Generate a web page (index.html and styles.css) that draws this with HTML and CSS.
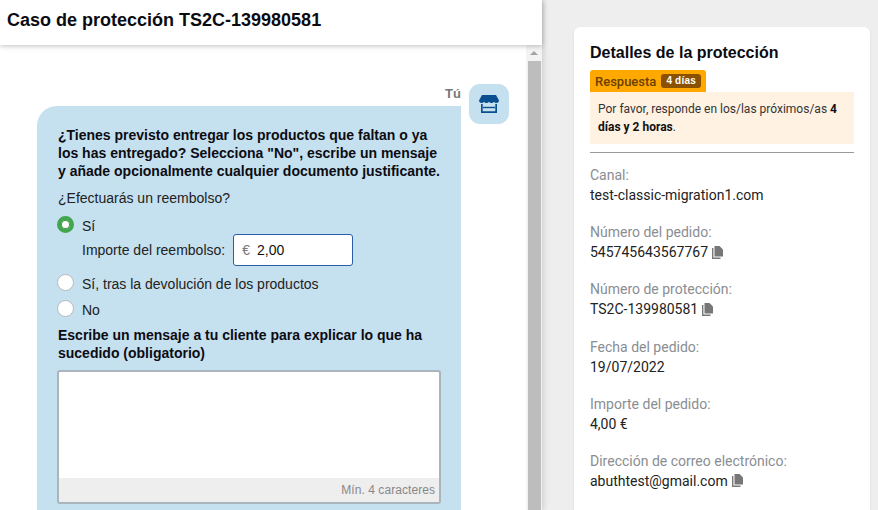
FILE: index.html
```html
<!DOCTYPE html>
<html lang="es">
<head>
<meta charset="utf-8">
<title>Caso de protección</title>
<link rel="stylesheet" href="styles.css">
</head>
<body>
<div class="page">
  <main class="left">
    <header class="head"><h1>Caso de protección TS2C-139980581</h1></header>
    <div class="scrollwrap">
      <div class="chat">
        <div class="msg">
          <div class="bubble-col">
            <div class="who">Tú</div>
            <div class="bubble">
              <p class="q">¿Tienes previsto entregar los productos que faltan o ya los has entregado? Selecciona "No", escribe un mensaje y añade opcionalmente cualquier documento justificante.</p>
              <p class="ask">¿Efectuarás un reembolso?</p>
              <div class="radio-row first"><span class="radio on"></span><span>Sí</span></div>
              <div class="amount-row">
                <span>Importe del reembolso:</span>
                <div class="amount"><span class="cur">€</span><span>2,00</span></div>
              </div>
              <div class="radio-row second"><span class="radio"></span><span>Sí, tras la devolución de los productos</span></div>
              <div class="radio-row third"><span class="radio"></span><span>No</span></div>
              <p class="q write">Escribe un mensaje a tu cliente para explicar lo que ha sucedido (obligatorio)</p>
              <div class="textarea">
                <div class="ta-body"></div>
                <div class="ta-foot">Mín. 4 caracteres</div>
              </div>
            </div>
          </div>
          <div class="avatar">
            <svg width="20" height="18" viewBox="0 0 20 18" aria-hidden="true">
              <path fill="#0a4f8f" d="M3 0h14l3 5.500c0 1.500-1.100 2.500-2.500 2.500-1 0-1.900-.5-2.500-1.300C14.400 7.500 13.500 8 12.500 8S10.600 7.500 10 6.700C9.400 7.500 8.500 8 7.500 8S5.600 7.500 5 6.700C4.400 7.500 3.500 8 2.500 8 1.100 8 0 7 0 5.500z"/>
              <path fill="#0a4f8f" d="M2 9h1.700v7.300h12.600V9H18v9H2z"/>
              <path fill="#0a4f8f" d="M4 11.800h12v1.400H4z"/>
            </svg>
          </div>
        </div>
      </div>
      <div class="scrollbar">
        <span class="arrow"></span>
        <span class="thumb"></span>
      </div>
    </div>
  </main>
  <aside class="right">
    <section class="card">
      <h2>Detalles de la protección</h2>
      <div class="tab"><span>Respuesta</span><span class="pill">4 días</span></div>
      <div class="notice">Por favor, responde en los/las próximos/as <b>4 días y 2 horas</b>.</div>
      <hr class="rule">
      <dl class="facts">
        <div class="fact"><dt>Canal:</dt><dd>test-classic-migration1.com</dd></div>
        <div class="fact"><dt>Número del pedido:</dt><dd>545745643567767<svg class="copy" viewBox="0 0 11 13" aria-hidden="true"><path d="M0 2h1.400v9.600H8.500V13H0z"/><path d="M2.500 0H7.500L11 3.500v7H2.500z"/></svg></dd></div>
        <div class="fact"><dt>Número de protección:</dt><dd>TS2C-139980581<svg class="copy" viewBox="0 0 11 13" aria-hidden="true"><path d="M0 2h1.400v9.600H8.500V13H0z"/><path d="M2.500 0H7.500L11 3.500v7H2.500z"/></svg></dd></div>
        <div class="fact"><dt>Fecha del pedido:</dt><dd>19/07/2022</dd></div>
        <div class="fact"><dt>Importe del pedido:</dt><dd>4,00 €</dd></div>
        <div class="fact"><dt>Dirección de correo electrónico:</dt><dd>abuthtest@gmail.com<svg class="copy" viewBox="0 0 11 13" aria-hidden="true"><path d="M0 2h1.400v9.600H8.500V13H0z"/><path d="M2.500 0H7.500L11 3.500v7H2.500z"/></svg></dd></div>
      </dl>
    </section>
  </aside>
</div>
</body>
</html>
```
FILE: styles.css
```css
* { box-sizing: border-box; }
html, body { margin: 0; height: 100%; overflow: hidden; }
body { font-family: "Liberation Sans", Arial, sans-serif; color: #111; background: #eee; }
.page { display: flex; width: 878px; height: 510px; overflow: hidden; }
.left { width: 542px; flex: none; background: #fff; display: flex; flex-direction: column; box-shadow: 1px 0 6px rgba(0,0,0,.16); position: relative; z-index: 1; }
.head { height: 45px; flex: none; padding: 9px 7px 0; box-shadow: 0 1px 5px rgba(0,0,0,.25); position: relative; z-index: 1; background: #fff; }
.head h1 { margin: 0; font-size: 18px; line-height: 22px; font-weight: 700; color: #0b0b12; white-space: nowrap; }
.scrollwrap { flex: 1; display: flex; min-height: 0; }
.chat { flex: 1; min-width: 0; padding: 39px 0 0 37px; overflow: hidden; }
.msg { display: flex; align-items: flex-start; gap: 8px; }
.bubble-col { width: 424px; flex: none; }
.who { text-align: right; font-size: 13px; line-height: 16px; font-weight: 700; color: #777; height: 22px; padding-top: 2px; }
.bubble { background: #c5e0ef; border-radius: 20px 0 0 0; padding: 20px 20px 20px 21px; height: 470px; font-size: 14px; color: #222; }
.bubble p { margin: 0; }
.q { font-weight: 700; font-size: 14px; line-height: 18px; color: #0c0c12; }
.ask { margin-top: 9px !important; line-height: 18px; }
.radio-row { display: flex; align-items: center; gap: 8px; height: 18px; }
.radio-row.first { margin-top: 10px; }
.radio-row.second { margin-top: 9px; }
.radio-row.third { margin-top: 8px; }
.radio { width: 17px; height: 17px; margin-left: -1px; margin-bottom: 3px; border-radius: 50%; background: #fff; border: 1px solid #b5b9bc; flex: none; }
.radio.on { border: 4px solid #43a64f; box-shadow: 0 0 0 1px #3d9448 inset; }
.amount-row { display: flex; align-items: center; gap: 8px; margin: -1px 0 0 24px; height: 32px; }
.amount { width: 120px; height: 32px; background: #fff; border: 1px solid #2a5ea8; border-radius: 3px; display: flex; align-items: center; padding-left: 8px; gap: 7px; color: #111; }
.cur { color: #777; }
.write { margin-top: 7px !important; }
.textarea { margin: 8px 0 0 -1px; width: 384px; height: 134px; border: 2px solid #aab4bb; border-radius: 3px; background: #fff; display: flex; flex-direction: column; }
.ta-body { flex: 1; }
.ta-foot { height: 24px; background: #eee; text-align: right; font-size: 12px; line-height: 24px; letter-spacing: .06px; color: #888; padding-right: 4px; }
.avatar { width: 40px; height: 40px; border-radius: 11px; background: #c5e0ef; flex: none; display: flex; align-items: center; justify-content: center; }
.scrollbar { width: 16px; flex: none; background: #f3f3f3; display: flex; flex-direction: column; align-items: center; }
.arrow { width: 0; height: 0; margin-top: 6px; border-left: 4px solid transparent; border-right: 4px solid transparent; border-bottom: 4px solid #a3a3a3; }
.thumb { width: 13px; flex: 1; margin-top: 6px; background: #bdbdbd; }
.right { flex: 1; min-width: 0; padding: 27px 8px 0 32px; }
.card { background: #fff; border-radius: 6px; height: 500px; padding: 16px 16px 0; box-shadow: 0 1px 3px rgba(0,0,0,.08); font-family: Roboto, sans-serif; }
.card h2 { margin: 0; font-family: "Liberation Sans", Arial, sans-serif; font-size: 16px; line-height: 20px; font-weight: 700; color: #0b0b12; }
.tab { display: inline-flex; align-items: center; gap: 5px; margin-top: 7px; height: 22px; padding: 0 5px; background: #ffa800; border-radius: 3px 3px 0 0; font-size: 13px; font-weight: 500; color: #6b4000; vertical-align: top; }
.pill { background: #8a5200; color: #fff; font-size: 10px; font-weight: 700; line-height: 14px; padding: 0 5px; border-radius: 3px; letter-spacing: .2px; font-family: "Liberation Sans", Arial, sans-serif; }
.notice { background: #fff2e3; font-size: 12px; line-height: 18px; padding: 8px; color: #333; }
.notice b { color: #111; font-weight: 700; }
.rule { border: 0; border-top: 1px solid #999; margin: 8px 0 0; }
.facts { margin: 12px 0 0; }
.fact { margin-bottom: 17.2px; }
.fact dt { font-size: 14px; line-height: 20px; color: #8a8d92; }
.fact dd { margin: 0; font-size: 14px; line-height: 20px; color: #222; display: flex; align-items: center; height: 20px; }
.copy { width: 11px; height: 13px; margin-left: 4px; fill: #777; }
```
